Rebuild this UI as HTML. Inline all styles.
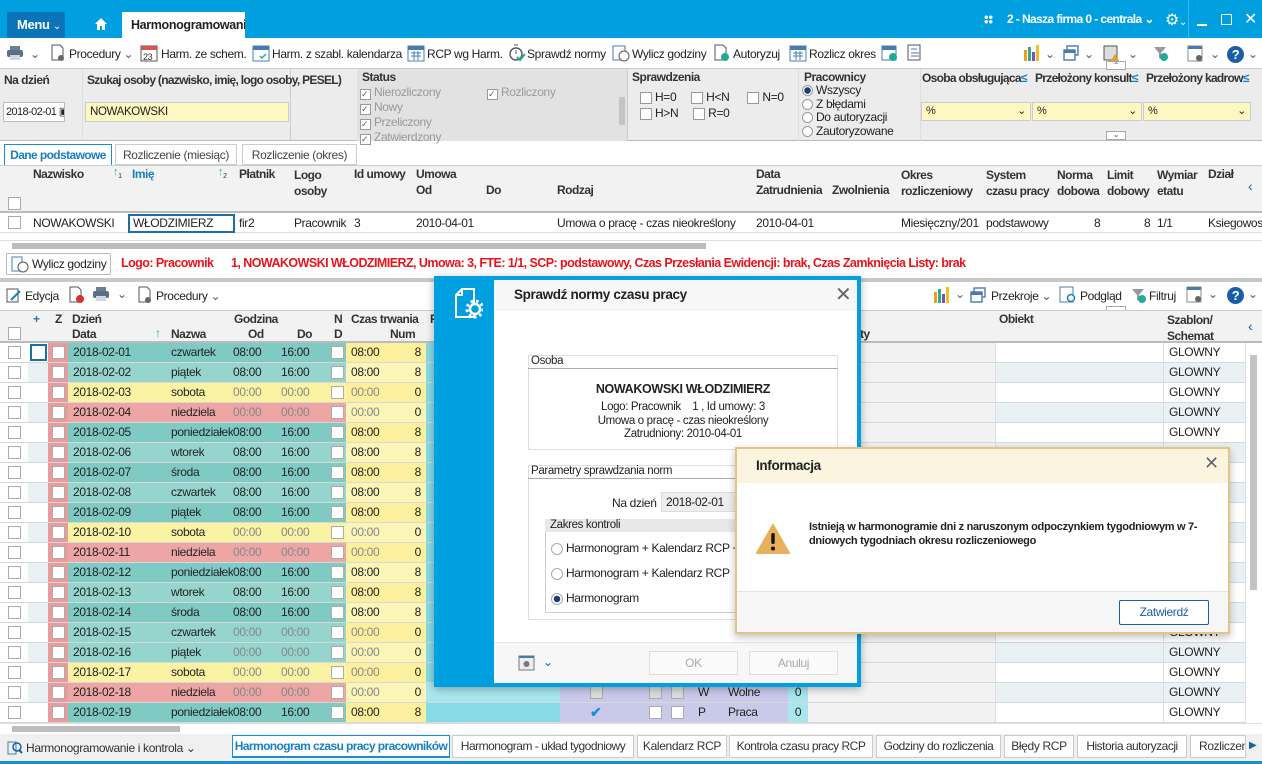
<!DOCTYPE html>
<html><head><meta charset="utf-8">
<style>
*{box-sizing:border-box;margin:0;padding:0}
body{width:1262px;height:764px;overflow:hidden;font-family:"Liberation Sans",sans-serif;font-size:12px;letter-spacing:-0.35px;color:#222;background:#fff;position:relative}
.a{position:absolute;white-space:nowrap}
.cb{position:absolute;width:13px;height:13px;border:1px solid #aaa;background:#fff}
.ti{display:inline-block;vertical-align:middle}
.tb span.it{position:absolute;top:47px;font-size:12px;color:#222;white-space:nowrap}
.hdr{position:absolute;font-weight:bold;font-size:12px;color:#333;white-space:nowrap;letter-spacing:-0.5px}
.r{position:absolute;left:0;width:1245px;height:20px;border-bottom:1px solid #d8d8d8}
.r div{position:absolute;top:0;height:19px;line-height:19px;white-space:nowrap;overflow:hidden}
.x0{left:0;width:28px;background:#fff}
.x1{left:28px;width:20px}
.xz{left:48px;width:20px;background:#ea9c9c}
.xd{left:68px;width:278px}
.xt{left:346px;width:80px;background:#fcf09e}
.xy{left:426px;width:134px;background:#86dbe6}
.xl{left:560px;width:228px;background:#c9c9e9}
.x0b{left:788px;width:20px;background:#a8e6ee;text-align:center}
.xg{left:808px;width:187px;background:#f2f2f2}
.xo{left:995px;width:168px;background:#fff;border-left:1px solid #ddd}
.xs{left:1163px;width:82px;background:#fff;padding-left:5px;border-left:1px solid #ddd}
.alt .x1,.alt .xo,.alt .xs{background:#eaf1f5}
.w .xd{background:#7fcbc4}.w2 .xd{background:#95d5ce}
.s .xd{background:#fbf3a4}.n .xd{background:#eda5a5}
.alt .xt{background:#fbf5b8}
.g .tm{color:#888}
.sb{position:absolute;width:13px;height:13px;border:1px solid #aaa;background:#fff;top:3px}
.btab{position:absolute;top:735px;height:23px;border:1px solid #ccc;background:#fff;line-height:21px;font-size:12px;color:#333;text-align:center;white-space:nowrap;overflow:hidden}
</style></head><body>

<!-- title bar -->
<div class="a" style="left:0;top:0;width:1262px;height:38px;background:#00a0e0"></div>
<div class="a" style="left:7px;top:12px;width:58px;height:26px;background:#0b73b8;color:#fff;font-weight:bold;font-size:13px;line-height:26px;padding-left:10px">Menu <span style="font-size:10px;font-weight:normal">&#8964;</span></div>
<svg class="a" style="left:94px;top:17px" width="14" height="14" viewBox="0 0 14 14"><path d="M7 1L1 7h2v6h3V9h2v4h3V7h2z" fill="#fff"/></svg>
<div class="a" style="left:122px;top:12px;width:123px;height:26px;background:#fff;font-weight:bold;font-size:12.5px;line-height:26px;padding-left:9px;overflow:hidden">Harmonogramowanie i Kontr</div>
<div class="a" style="left:984px;top:15px;width:9px;height:9px;background:radial-gradient(circle,#fff 1.5px,transparent 2px) 0 0/4.5px 4.5px"></div>
<div class="a" style="left:1007px;top:12px;color:#fff;font-weight:bold;font-size:12px;letter-spacing:-0.6px">2 - Nasza firma 0 - centrala &#8964;</div>
<div class="a" style="left:1165px;top:10px;color:#fff;font-size:16px">&#9881;<span style="font-size:10px">&#8964;</span></div>
<div class="a" style="left:1188px;top:0;width:1px;height:38px;background:#3cb6e8"></div>
<div class="a" style="left:1197px;top:24px;width:10px;height:2px;background:#fff"></div>
<div class="a" style="left:1221px;top:14px;width:11px;height:11px;border:1.5px solid #fff"></div>
<div class="a" style="left:1244px;top:9px;color:#fff;font-size:16px">&#10005;</div>

<!-- toolbar -->
<div class="a" style="left:0;top:38px;width:1262px;height:31px;background:#fff;border-bottom:1px solid #ccc"></div>
<div class="tb">
<svg class="a" style="left:6px;top:45px" width="18" height="16"><rect x="4" y="1" width="10" height="4" fill="#6b7f93"/><rect x="1" y="5" width="16" height="7" rx="2" fill="#5b7086"/><rect x="4" y="10" width="10" height="5" fill="#cfd8e0"/></svg>
<span class="it" style="left:30px;color:#557">&#8964;</span>
<svg class="a" style="left:50px;top:44px" width="16" height="18"><path d="M2 1h8l3 3v12H2z" fill="none" stroke="#555"/><circle cx="11" cy="14" r="3" fill="#666"/></svg>
<span class="it" style="left:69px">Procedury <span style="color:#557">&#8964;</span></span>
<svg class="a" style="left:140px;top:44px" width="18" height="18"><rect x="1" y="2" width="16" height="15" fill="#fff" stroke="#555"/><rect x="1" y="2" width="16" height="4" fill="#d9534f"/><text x="3" y="16" font-size="9" font-family="Liberation Sans" fill="#333">23</text></svg>
<span class="it" style="left:161px">Harm. ze schem.</span>
<svg class="a" style="left:252px;top:44px" width="18" height="18"><rect x="1" y="2" width="16" height="15" fill="#fff" stroke="#4a7bb0"/><rect x="1" y="2" width="16" height="4" fill="#4a7bb0"/><path d="M8 12l2 2 4-4" stroke="#2a9" fill="none" stroke-width="1.5"/></svg>
<span class="it" style="left:272px">Harm. z szabl. kalendarza</span>
<svg class="a" style="left:407px;top:44px" width="18" height="18"><rect x="1" y="2" width="16" height="15" fill="#fff" stroke="#4a7bb0"/><rect x="1" y="2" width="16" height="4" fill="#4a7bb0"/><path d="M4 9h10M4 12h10M7 7v9M11 7v9" stroke="#4a7bb0"/></svg>
<span class="it" style="left:427px">RCP wg Harm.</span>
<svg class="a" style="left:508px;top:44px" width="18" height="18"><circle cx="8" cy="10" r="6" fill="none" stroke="#555" stroke-width="1.4"/><path d="M6 1h4M8 10V6" stroke="#555"/><path d="M9 13l3 3 5-6" stroke="#2a9" stroke-width="2" fill="none"/></svg>
<span class="it" style="left:527px">Sprawdź normy</span>
<svg class="a" style="left:612px;top:44px" width="18" height="18"><rect x="1" y="2" width="12" height="14" fill="#fff" stroke="#4a7bb0"/><circle cx="12" cy="12" r="5" fill="#fff" stroke="#555"/></svg>
<span class="it" style="left:632px">Wylicz godziny</span>
<svg class="a" style="left:713px;top:44px" width="18" height="18"><path d="M2 1h8l3 3v12H2z" fill="none" stroke="#555"/><circle cx="12" cy="13" r="4" fill="#2a9"/></svg>
<span class="it" style="left:733px">Autoryzuj</span>
<svg class="a" style="left:789px;top:44px" width="18" height="18"><rect x="1" y="2" width="16" height="15" fill="#fff" stroke="#4a7bb0"/><rect x="1" y="2" width="16" height="4" fill="#4a7bb0"/><path d="M4 9h10M4 12h10M7 7v9M11 7v9" stroke="#4a7bb0"/></svg>
<span class="it" style="left:809px">Rozlicz okres</span>
<svg class="a" style="left:881px;top:44px" width="18" height="18"><rect x="1" y="2" width="14" height="14" fill="#fff" stroke="#4a7bb0"/><rect x="1" y="2" width="14" height="4" fill="#4a7bb0"/><circle cx="12" cy="13" r="4" fill="#2a9"/></svg>
<svg class="a" style="left:906px;top:44px" width="18" height="18"><rect x="2" y="1" width="12" height="15" fill="#fff" stroke="#555"/><path d="M5 5h6M5 9h8M5 12h8" stroke="#4a7bb0"/></svg>
<svg class="a" style="left:1022px;top:44px" width="18" height="18"><rect x="2" y="6" width="3" height="11" fill="#e8a020"/><rect x="6" y="3" width="3" height="14" fill="#3a8"/><rect x="10" y="8" width="3" height="9" fill="#7a4fc0"/><rect x="14" y="1" width="3" height="16" fill="#f0c020"/></svg>
<span class="it" style="left:1045px;color:#557">&#8964;</span>
<svg class="a" style="left:1063px;top:45px" width="16" height="16"><rect x="4" y="1" width="11" height="9" fill="none" stroke="#4a7bb0" stroke-width="1.4"/><rect x="1" y="5" width="11" height="10" fill="#fff" stroke="#4a7bb0" stroke-width="1.4"/><rect x="1" y="5" width="11" height="3" fill="#4a7bb0"/></svg>
<span class="it" style="left:1084px;color:#557">&#8964;</span>
<svg class="a" style="left:1103px;top:45px" width="18" height="18"><rect x="1" y="1" width="13" height="14" fill="#ddd" stroke="#555"/><path d="M12 9l5 8h-10z" fill="#e8a020"/></svg>
<span class="it" style="left:1128px;color:#557">&#8964;</span>
<svg class="a" style="left:1153px;top:45px" width="16" height="16"><path d="M1 2h12l-5 6v6l-2-1V8z" fill="#999"/><circle cx="11" cy="12" r="4" fill="#2a9"/></svg>
<svg class="a" style="left:1187px;top:45px" width="18" height="18"><rect x="1" y="1" width="14" height="15" fill="#fff" stroke="#888"/><rect x="1" y="1" width="14" height="3" fill="#4a7bb0"/><circle cx="12" cy="13" r="3" fill="#666"/></svg>
<span class="it" style="left:1210px;color:#557">&#8964;</span>
<div class="a" style="left:1227px;top:46px;width:17px;height:17px;border-radius:50%;background:#1a5ea8;color:#fff;font-weight:bold;text-align:center;line-height:17px;font-size:13px">?</div>
<span class="it" style="left:1248px;color:#557">&#8964;</span>
</div>

<!-- filter panel -->
<div class="a" style="left:0;top:69px;width:1262px;height:72px;background:#ececec;border-bottom:1px solid #bbb"></div>
<div class="a" style="left:82px;top:69px;width:1px;height:72px;background:#ddd"></div>
<div class="a" style="left:290px;top:69px;width:1px;height:72px;background:#ccc"></div>
<div class="a" style="left:357px;top:69px;width:270px;height:72px;background:#e2e2e2"></div>
<div class="a" style="left:627px;top:69px;width:1px;height:72px;background:#ccc"></div>
<div class="a" style="left:798px;top:69px;width:1px;height:72px;background:#ddd"></div>
<div class="a" style="left:920px;top:69px;width:1px;height:72px;background:#ddd"></div>
<div class="hdr" style="left:4px;top:73px">Na dzień</div>
<div class="hdr" style="left:87px;top:73px;letter-spacing:-0.7px">Szukaj osoby (nazwisko, imię, logo osoby, PESEL)</div>
<div class="a" style="left:3px;top:102px;width:62px;height:20px;border:1px solid #bbb;background:#fff;line-height:18px;padding-left:2px;font-size:11px;letter-spacing:-0.6px;overflow:hidden">2018-02-01 &#9635;</div>
<div class="a" style="left:85px;top:102px;width:204px;height:20px;border:1px solid #ccc;background:#fdf8c2;line-height:18px;padding-left:4px;font-size:11.5px">NOWAKOWSKI</div>
<div class="hdr" style="left:362px;top:70px">Status</div>
<div class="a" style="left:360px;top:85px;color:#999;font-size:12px;line-height:14px">
<div><span style="display:inline-block;width:11px;height:11px;border:1px solid #999;background:#fff;color:#468;font-size:9px;line-height:9px;vertical-align:-1px">&#10003;</span> Nierozliczony</div>
<div><span style="display:inline-block;width:11px;height:11px;border:1px solid #999;background:#fff;color:#468;font-size:9px;line-height:9px;vertical-align:-1px">&#10003;</span> Nowy</div>
<div><span style="display:inline-block;width:11px;height:11px;border:1px solid #999;background:#fff;color:#468;font-size:9px;line-height:9px;vertical-align:-1px">&#10003;</span> Przeliczony</div>
<div><span style="display:inline-block;width:11px;height:11px;border:1px solid #999;background:#fff;color:#468;font-size:9px;line-height:9px;vertical-align:-1px">&#10003;</span> Zatwierdzony</div>
</div>
<div class="a" style="left:487px;top:85px;color:#999;font-size:12px"><span style="display:inline-block;width:11px;height:11px;border:1px solid #999;background:#fff;color:#468;font-size:9px;line-height:9px;vertical-align:-1px">&#10003;</span> Rozliczony</div>
<div class="a" style="left:619px;top:97px;width:6px;height:28px;background:#c4c4c4"></div>
<div class="hdr" style="left:632px;top:70px">Sprawdzenia</div>
<div class="a" style="left:640px;top:89px;font-size:12px;line-height:16px">
<span class="ti" style="width:12px;height:12px;border:1px solid #999;background:#fff"></span> H=0 &nbsp;&nbsp;&nbsp;&nbsp;<span class="ti" style="width:12px;height:12px;border:1px solid #999;background:#fff"></span> H&lt;N &nbsp;&nbsp;&nbsp;&nbsp;&nbsp;<span class="ti" style="width:12px;height:12px;border:1px solid #999;background:#fff"></span> N=0<br>
<span class="ti" style="width:12px;height:12px;border:1px solid #999;background:#fff"></span> H&gt;N &nbsp;&nbsp;&nbsp;&nbsp;<span class="ti" style="width:12px;height:12px;border:1px solid #999;background:#fff"></span> R=0</div>
<div class="hdr" style="left:804px;top:70px">Pracownicy</div>
<div class="a" style="left:802px;top:84px;font-size:12px;line-height:13.5px">
<div><span class="ti" style="width:11px;height:11px;border-radius:50%;border:1px solid #999;background:radial-gradient(circle,#1a3f7a 3px,#fff 3.5px)"></span> Wszyscy</div>
<div><span class="ti" style="width:11px;height:11px;border-radius:50%;border:1px solid #999;background:#fff"></span> Z błędami</div>
<div><span class="ti" style="width:11px;height:11px;border-radius:50%;border:1px solid #999;background:#fff"></span> Do autoryzacji</div>
<div><span class="ti" style="width:11px;height:11px;border-radius:50%;border:1px solid #999;background:#fff"></span> Zautoryzowane</div>
</div>
<div class="hdr" style="left:922px;top:71px;width:110px;overflow:hidden;letter-spacing:-0.7px">Osoba obsługująca<span style="color:#1a7fc0">&#8804;</span></div>
<div class="hdr" style="left:1035px;top:71px;width:108px;overflow:hidden;letter-spacing:-0.7px">Przełożony konsult<span style="color:#1a7fc0">&#8804;</span></div>
<div class="hdr" style="left:1146px;top:71px;width:104px;overflow:hidden;letter-spacing:-0.7px">Przełożony kadrow<span style="color:#1a7fc0">&#8804;</span></div>
<div class="a" style="left:921px;top:102px;width:110px;height:19px;border:1px solid #ccc;background:#fdf8c2;line-height:17px;padding-left:4px;font-size:11px">%<span style="position:absolute;right:4px">&#8964;</span></div>
<div class="a" style="left:1032px;top:102px;width:110px;height:19px;border:1px solid #ccc;background:#fdf8c2;line-height:17px;padding-left:4px;font-size:11px">%<span style="position:absolute;right:4px">&#8964;</span></div>
<div class="a" style="left:1143px;top:102px;width:108px;height:19px;border:1px solid #ccc;background:#fdf8c2;line-height:17px;padding-left:4px;font-size:11px">%<span style="position:absolute;right:4px">&#8964;</span></div>
<div class="a" style="left:1106px;top:61px;width:20px;height:9px;border:1px solid #aaa;background:#fff;font-size:8px;text-align:center;line-height:8px;color:#1a5ea8">&#8963;</div>
<div class="a" style="left:1106px;top:131px;width:20px;height:9px;border:1px solid #aaa;background:#fff;font-size:8px;text-align:center;line-height:6px;color:#1a5ea8">&#8964;</div>

<!-- tabs -->
<div class="a" style="left:4px;top:144px;width:108px;height:22px;border:1px solid #1a8fd0;border-bottom:none;background:#fff;color:#1a7fc0;font-weight:bold;line-height:20px;text-align:center;letter-spacing:-0.6px">Dane podstawowe</div>
<div class="a" style="left:115px;top:144px;width:122px;height:21px;border:1px solid #ccc;background:#fff;color:#444;line-height:20px;text-align:center">Rozliczenie (miesiąc)</div>
<div class="a" style="left:242px;top:144px;width:115px;height:21px;border:1px solid #ccc;background:#fff;color:#444;line-height:20px;text-align:center">Rozliczenie (okres)</div>

<!-- upper grid -->
<div class="a" style="left:0;top:165px;width:1262px;height:48px;background:#f2f2f2;border-top:1px solid #ccc;border-bottom:2px solid #bbb"></div>
<div class="cb" style="left:8px;top:197px"></div>
<div class="hdr" style="left:33px;top:167px">Nazwisko</div><div class="a" style="left:113px;top:166px;color:#3a8;font-size:11px">&#8593;<sub style="color:#333;font-size:7px">1</sub></div>
<div class="hdr" style="left:132px;top:167px;color:#1a7fc0">Imię</div><div class="a" style="left:218px;top:166px;color:#3a8;font-size:11px">&#8593;<sub style="color:#333;font-size:7px">2</sub></div>
<div class="hdr" style="left:239px;top:167px">Płatnik</div>
<div class="hdr" style="left:294px;top:167px;line-height:16px">Logo<br>osoby</div>
<div class="hdr" style="left:354px;top:167px">Id umowy</div>
<div class="hdr" style="left:416px;top:167px">Umowa</div>
<div class="hdr" style="left:416px;top:183px">Od</div><div class="hdr" style="left:486px;top:183px">Do</div><div class="hdr" style="left:557px;top:183px">Rodzaj</div>
<div class="hdr" style="left:756px;top:167px">Data</div>
<div class="hdr" style="left:756px;top:183px">Zatrudnienia</div><div class="hdr" style="left:832px;top:183px">Zwolnienia</div>
<div class="hdr" style="left:901px;top:167px;line-height:16px">Okres<br>rozliczeniowy</div>
<div class="hdr" style="left:986px;top:167px;line-height:16px">System<br>czasu pracy</div>
<div class="hdr" style="left:1057px;top:167px;line-height:16px">Norma<br>dobowa</div>
<div class="hdr" style="left:1107px;top:167px;line-height:16px">Limit<br>dobowy</div>
<div class="hdr" style="left:1157px;top:167px;line-height:16px">Wymiar<br>etatu</div>
<div class="hdr" style="left:1208px;top:167px">Dział</div>
<div class="a" style="left:1248px;top:178px;color:#1a5ea8;font-size:14px">&#8249;</div>
<div class="a" style="left:0;top:213px;width:1262px;height:20px;border-bottom:1px solid #ddd;line-height:20px">
<div class="cb" style="left:8px;top:3px"></div>
<span class="a" style="left:33px">NOWAKOWSKI</span>
<span class="a" style="left:128px;top:1px;width:107px;height:19px;border:2px solid #1a6fa8;line-height:15px;padding-left:3px">WŁODZIMIERZ</span>
<span class="a" style="left:239px">fir2</span><span class="a" style="left:294px">Pracownik</span><span class="a" style="left:354px">3</span>
<span class="a" style="left:416px">2010-04-01</span><span class="a" style="left:557px">Umowa o pracę - czas nieokreślony</span>
<span class="a" style="left:756px">2010-04-01</span><span class="a" style="left:901px;width:82px;overflow:hidden">Miesięczny/201</span><span class="a" style="left:986px">podstawowy</span>
<span class="a" style="left:1094px">8</span><span class="a" style="left:1144px">8</span><span class="a" style="left:1157px">1/1</span><span class="a" style="left:1208px">Ksiegowos</span>
</div>
<div class="a" style="left:0;top:240px;width:1262px;height:10px;border-top:1px solid #ddd"></div>
<div class="a" style="left:12px;top:243px;width:694px;height:6px;background:#bdbdbd"></div>
<div class="a" style="left:6px;top:253px;width:105px;height:22px;border:1px solid #bbb;border-radius:2px;background:#fff;line-height:20px;padding-left:25px">Wylicz godziny</div>
<svg class="a" style="left:11px;top:256px" width="18" height="17"><rect x="1" y="1" width="10" height="14" fill="#fff" stroke="#4a7bb0"/><circle cx="12" cy="11" r="5" fill="#fff" stroke="#555"/></svg>
<div class="a" style="left:121px;top:256px;color:#e8131b;font-weight:bold;font-size:12.5px;letter-spacing:-0.55px">Logo: Pracownik &nbsp;&nbsp;&nbsp;&nbsp;&nbsp;1, NOWAKOWSKI WŁODZIMIERZ, Umowa: 3, FTE: 1/1, SCP: podstawowy, Czas Przesłania Ewidencji: brak, Czas Zamknięcia Listy: brak</div>
<div class="a" style="left:0;top:278px;width:1262px;height:4px;background:#c8c8c8"></div>

<!-- lower toolbar -->
<svg class="a" style="left:6px;top:287px" width="16" height="16"><rect x="1" y="2" width="11" height="13" fill="none" stroke="#555"/><path d="M5 13l9-9" stroke="#1a7fc0" stroke-width="2"/></svg>
<span class="a" style="left:25px;top:289px">Edycja</span>
<svg class="a" style="left:68px;top:286px" width="18" height="18"><path d="M2 1h8l3 3v12H2z" fill="none" stroke="#555"/><circle cx="12" cy="13" r="4" fill="#d9342b"/></svg>
<svg class="a" style="left:92px;top:286px" width="18" height="16"><rect x="4" y="1" width="10" height="4" fill="#6b7f93"/><rect x="1" y="5" width="16" height="7" rx="2" fill="#5b7086"/><rect x="4" y="10" width="10" height="5" fill="#cfd8e0"/></svg>
<span class="a" style="left:117px;top:287px;color:#557">&#8964;</span>
<svg class="a" style="left:137px;top:286px" width="16" height="18"><path d="M2 1h8l3 3v12H2z" fill="none" stroke="#555"/><circle cx="11" cy="14" r="3" fill="#666"/></svg>
<span class="a" style="left:156px;top:289px">Procedury <span style="color:#557">&#8964;</span></span>
<svg class="a" style="left:932px;top:286px" width="18" height="18"><rect x="2" y="6" width="3" height="11" fill="#e8a020"/><rect x="6" y="3" width="3" height="14" fill="#3a8"/><rect x="10" y="8" width="3" height="9" fill="#7a4fc0"/><rect x="14" y="1" width="3" height="16" fill="#f0c020"/></svg>
<span class="a" style="left:955px;top:287px;color:#557">&#8964;</span>
<svg class="a" style="left:970px;top:287px" width="16" height="16"><rect x="4" y="1" width="11" height="9" fill="none" stroke="#4a7bb0" stroke-width="1.4"/><rect x="1" y="5" width="11" height="10" fill="#fff" stroke="#4a7bb0" stroke-width="1.4"/><rect x="1" y="5" width="11" height="3" fill="#4a7bb0"/></svg>
<span class="a" style="left:991px;top:289px">Przekroje <span style="color:#557">&#8964;</span></span>
<svg class="a" style="left:1059px;top:286px" width="18" height="18"><rect x="1" y="1" width="13" height="15" fill="#fff" stroke="#4a7bb0"/><circle cx="12" cy="12" r="3.5" fill="#fff" stroke="#1a7fc0" stroke-width="1.5"/></svg>
<span class="a" style="left:1080px;top:289px">Podgląd</span>
<svg class="a" style="left:1131px;top:287px" width="16" height="16"><path d="M1 2h12l-5 6v6l-2-1V8z" fill="#999"/><circle cx="11" cy="12" r="4" fill="#2a9"/></svg>
<span class="a" style="left:1149px;top:289px">Filtruj</span>
<svg class="a" style="left:1186px;top:286px" width="18" height="18"><rect x="1" y="1" width="14" height="15" fill="#fff" stroke="#888"/><rect x="1" y="1" width="14" height="3" fill="#4a7bb0"/><circle cx="12" cy="13" r="3" fill="#666"/></svg>
<span class="a" style="left:1208px;top:287px;color:#557">&#8964;</span>
<div class="a" style="left:1227px;top:287px;width:17px;height:17px;border-radius:50%;background:#1a5ea8;color:#fff;font-weight:bold;text-align:center;line-height:17px;font-size:13px">?</div>
<span class="a" style="left:1248px;top:287px;color:#557">&#8964;</span>
<div class="a" style="left:1106px;top:306px;width:20px;height:9px;border:1px solid #aaa;background:#fff;font-size:8px;text-align:center;line-height:6px;color:#1a5ea8">&#8964;</div>

<!-- lower header -->
<div class="a" style="left:0;top:310px;width:1262px;height:33px;background:#f2f2f2;border-top:1px solid #ccc;border-bottom:2px solid #bbb"></div>
<div class="cb" style="left:8px;top:327px"></div>
<div class="hdr" style="left:33px;top:312px;color:#1a7fc0">+</div>
<div class="hdr" style="left:55px;top:312px">Z</div>
<div class="hdr" style="left:72px;top:312px">Dzień</div>
<div class="hdr" style="left:72px;top:327px">Data</div><div class="a" style="left:155px;top:326px;color:#3a8">&#8593;</div>
<div class="hdr" style="left:171px;top:327px">Nazwa</div>
<div class="hdr" style="left:234px;top:312px">Godzina</div>
<div class="hdr" style="left:248px;top:327px">Od</div><div class="hdr" style="left:297px;top:327px">Do</div>
<div class="hdr" style="left:334px;top:312px">N</div><div class="hdr" style="left:334px;top:327px">D</div>
<div class="hdr" style="left:351px;top:312px">Czas trwania</div><div class="hdr" style="left:390px;top:327px">Num</div>
<div class="hdr" style="left:430px;top:312px">P</div>
<div class="hdr" style="left:860px;top:327px">ty</div>
<div class="hdr" style="left:999px;top:312px">Obiekt</div>
<div class="hdr" style="left:1167px;top:312px;line-height:16px">Szablon/<br>Schemat</div>
<div class="a" style="left:1248px;top:318px;color:#1a5ea8;font-size:14px">&#8249;</div>

<!-- lower rows -->
<div id="rows">
<div class="r w" style="top:343px"><div class="x0"><span class="sb" style="left:8px"></span></div><div class="x1"><span class="a" style="left:2px;top:1px;width:17px;height:17px;border:2px solid #1a6fa8;background:#fff"></span></div><div class="xz"><span class="sb" style="left:4px"></span></div><div class="xd"><span class="a" style="left:5px">2018-02-01</span><span class="a" style="left:103px">czwartek</span><span class="a tm" style="left:165px">08:00</span><span class="a tm" style="left:213px">16:00</span><span class="sb" style="left:263px"></span></div><div class="xt"><span class="a tm" style="left:5px">08:00</span><span class="a" style="right:5px">8</span></div><div class="xy"></div><div class="xl"></div><div class="x0b">0</div><div class="xg"></div><div class="xo"></div><div class="xs">GLOWNY</div></div>
<div class="r w2 alt" style="top:363px"><div class="x0"><span class="sb" style="left:8px"></span></div><div class="x1"></div><div class="xz"><span class="sb" style="left:4px"></span></div><div class="xd"><span class="a" style="left:5px">2018-02-02</span><span class="a" style="left:103px">piątek</span><span class="a tm" style="left:165px">08:00</span><span class="a tm" style="left:213px">16:00</span><span class="sb" style="left:263px"></span></div><div class="xt"><span class="a tm" style="left:5px">08:00</span><span class="a" style="right:5px">8</span></div><div class="xy"></div><div class="xl"></div><div class="x0b">0</div><div class="xg"></div><div class="xo"></div><div class="xs">GLOWNY</div></div>
<div class="r s g" style="top:383px"><div class="x0"><span class="sb" style="left:8px"></span></div><div class="x1"></div><div class="xz"><span class="sb" style="left:4px"></span></div><div class="xd"><span class="a" style="left:5px">2018-02-03</span><span class="a" style="left:103px">sobota</span><span class="a tm" style="left:165px">00:00</span><span class="a tm" style="left:213px">00:00</span><span class="sb" style="left:263px"></span></div><div class="xt"><span class="a tm" style="left:5px">00:00</span><span class="a" style="right:5px">0</span></div><div class="xy"></div><div class="xl"></div><div class="x0b">0</div><div class="xg"></div><div class="xo"></div><div class="xs">GLOWNY</div></div>
<div class="r n g alt" style="top:403px"><div class="x0"><span class="sb" style="left:8px"></span></div><div class="x1"></div><div class="xz"><span class="sb" style="left:4px"></span></div><div class="xd"><span class="a" style="left:5px">2018-02-04</span><span class="a" style="left:103px">niedziela</span><span class="a tm" style="left:165px">00:00</span><span class="a tm" style="left:213px">00:00</span><span class="sb" style="left:263px"></span></div><div class="xt"><span class="a tm" style="left:5px">00:00</span><span class="a" style="right:5px">0</span></div><div class="xy"></div><div class="xl"></div><div class="x0b">0</div><div class="xg"></div><div class="xo"></div><div class="xs">GLOWNY</div></div>
<div class="r w" style="top:423px"><div class="x0"><span class="sb" style="left:8px"></span></div><div class="x1"></div><div class="xz"><span class="sb" style="left:4px"></span></div><div class="xd"><span class="a" style="left:5px">2018-02-05</span><span class="a" style="left:103px;width:62px;overflow:hidden">poniedziałek</span><span class="a tm" style="left:165px">08:00</span><span class="a tm" style="left:213px">16:00</span><span class="sb" style="left:263px"></span></div><div class="xt"><span class="a tm" style="left:5px">08:00</span><span class="a" style="right:5px">8</span></div><div class="xy"></div><div class="xl"></div><div class="x0b">0</div><div class="xg"></div><div class="xo"></div><div class="xs">GLOWNY</div></div>
<div class="r w2 alt" style="top:443px"><div class="x0"><span class="sb" style="left:8px"></span></div><div class="x1"></div><div class="xz"><span class="sb" style="left:4px"></span></div><div class="xd"><span class="a" style="left:5px">2018-02-06</span><span class="a" style="left:103px">wtorek</span><span class="a tm" style="left:165px">08:00</span><span class="a tm" style="left:213px">16:00</span><span class="sb" style="left:263px"></span></div><div class="xt"><span class="a tm" style="left:5px">08:00</span><span class="a" style="right:5px">8</span></div><div class="xy"></div><div class="xl"></div><div class="x0b">0</div><div class="xg"></div><div class="xo"></div><div class="xs">GLOWNY</div></div>
<div class="r w" style="top:463px"><div class="x0"><span class="sb" style="left:8px"></span></div><div class="x1"></div><div class="xz"><span class="sb" style="left:4px"></span></div><div class="xd"><span class="a" style="left:5px">2018-02-07</span><span class="a" style="left:103px">środa</span><span class="a tm" style="left:165px">08:00</span><span class="a tm" style="left:213px">16:00</span><span class="sb" style="left:263px"></span></div><div class="xt"><span class="a tm" style="left:5px">08:00</span><span class="a" style="right:5px">8</span></div><div class="xy"></div><div class="xl"></div><div class="x0b">0</div><div class="xg"></div><div class="xo"></div><div class="xs">GLOWNY</div></div>
<div class="r w2 alt" style="top:483px"><div class="x0"><span class="sb" style="left:8px"></span></div><div class="x1"></div><div class="xz"><span class="sb" style="left:4px"></span></div><div class="xd"><span class="a" style="left:5px">2018-02-08</span><span class="a" style="left:103px">czwartek</span><span class="a tm" style="left:165px">08:00</span><span class="a tm" style="left:213px">16:00</span><span class="sb" style="left:263px"></span></div><div class="xt"><span class="a tm" style="left:5px">08:00</span><span class="a" style="right:5px">8</span></div><div class="xy"></div><div class="xl"></div><div class="x0b">0</div><div class="xg"></div><div class="xo"></div><div class="xs">GLOWNY</div></div>
<div class="r w" style="top:503px"><div class="x0"><span class="sb" style="left:8px"></span></div><div class="x1"></div><div class="xz"><span class="sb" style="left:4px"></span></div><div class="xd"><span class="a" style="left:5px">2018-02-09</span><span class="a" style="left:103px">piątek</span><span class="a tm" style="left:165px">08:00</span><span class="a tm" style="left:213px">16:00</span><span class="sb" style="left:263px"></span></div><div class="xt"><span class="a tm" style="left:5px">08:00</span><span class="a" style="right:5px">8</span></div><div class="xy"></div><div class="xl"></div><div class="x0b">0</div><div class="xg"></div><div class="xo"></div><div class="xs">GLOWNY</div></div>
<div class="r s g alt" style="top:523px"><div class="x0"><span class="sb" style="left:8px"></span></div><div class="x1"></div><div class="xz"><span class="sb" style="left:4px"></span></div><div class="xd"><span class="a" style="left:5px">2018-02-10</span><span class="a" style="left:103px">sobota</span><span class="a tm" style="left:165px">00:00</span><span class="a tm" style="left:213px">00:00</span><span class="sb" style="left:263px"></span></div><div class="xt"><span class="a tm" style="left:5px">00:00</span><span class="a" style="right:5px">0</span></div><div class="xy"></div><div class="xl"></div><div class="x0b">0</div><div class="xg"></div><div class="xo"></div><div class="xs">GLOWNY</div></div>
<div class="r n g" style="top:543px"><div class="x0"><span class="sb" style="left:8px"></span></div><div class="x1"></div><div class="xz"><span class="sb" style="left:4px"></span></div><div class="xd"><span class="a" style="left:5px">2018-02-11</span><span class="a" style="left:103px">niedziela</span><span class="a tm" style="left:165px">00:00</span><span class="a tm" style="left:213px">00:00</span><span class="sb" style="left:263px"></span></div><div class="xt"><span class="a tm" style="left:5px">00:00</span><span class="a" style="right:5px">0</span></div><div class="xy"></div><div class="xl"></div><div class="x0b">0</div><div class="xg"></div><div class="xo"></div><div class="xs">GLOWNY</div></div>
<div class="r w alt" style="top:563px"><div class="x0"><span class="sb" style="left:8px"></span></div><div class="x1"></div><div class="xz"><span class="sb" style="left:4px"></span></div><div class="xd"><span class="a" style="left:5px">2018-02-12</span><span class="a" style="left:103px;width:62px;overflow:hidden">poniedziałek</span><span class="a tm" style="left:165px">08:00</span><span class="a tm" style="left:213px">16:00</span><span class="sb" style="left:263px"></span></div><div class="xt"><span class="a tm" style="left:5px">08:00</span><span class="a" style="right:5px">8</span></div><div class="xy"></div><div class="xl"></div><div class="x0b">0</div><div class="xg"></div><div class="xo"></div><div class="xs">GLOWNY</div></div>
<div class="r w2" style="top:583px"><div class="x0"><span class="sb" style="left:8px"></span></div><div class="x1"></div><div class="xz"><span class="sb" style="left:4px"></span></div><div class="xd"><span class="a" style="left:5px">2018-02-13</span><span class="a" style="left:103px">wtorek</span><span class="a tm" style="left:165px">08:00</span><span class="a tm" style="left:213px">16:00</span><span class="sb" style="left:263px"></span></div><div class="xt"><span class="a tm" style="left:5px">08:00</span><span class="a" style="right:5px">8</span></div><div class="xy"></div><div class="xl"></div><div class="x0b">0</div><div class="xg"></div><div class="xo"></div><div class="xs">GLOWNY</div></div>
<div class="r w alt" style="top:603px"><div class="x0"><span class="sb" style="left:8px"></span></div><div class="x1"></div><div class="xz"><span class="sb" style="left:4px"></span></div><div class="xd"><span class="a" style="left:5px">2018-02-14</span><span class="a" style="left:103px">środa</span><span class="a tm" style="left:165px">08:00</span><span class="a tm" style="left:213px">16:00</span><span class="sb" style="left:263px"></span></div><div class="xt"><span class="a tm" style="left:5px">08:00</span><span class="a" style="right:5px">8</span></div><div class="xy"></div><div class="xl"></div><div class="x0b">0</div><div class="xg"></div><div class="xo"></div><div class="xs">GLOWNY</div></div>
<div class="r w2 g" style="top:623px"><div class="x0"><span class="sb" style="left:8px"></span></div><div class="x1"></div><div class="xz"><span class="sb" style="left:4px"></span></div><div class="xd"><span class="a" style="left:5px">2018-02-15</span><span class="a" style="left:103px">czwartek</span><span class="a tm" style="left:165px">00:00</span><span class="a tm" style="left:213px">00:00</span><span class="sb" style="left:263px"></span></div><div class="xt"><span class="a tm" style="left:5px">00:00</span><span class="a" style="right:5px">0</span></div><div class="xy"></div><div class="xl"></div><div class="x0b">0</div><div class="xg"></div><div class="xo"></div><div class="xs">GLOWNY</div></div>
<div class="r w g alt" style="top:643px"><div class="x0"><span class="sb" style="left:8px"></span></div><div class="x1"></div><div class="xz"><span class="sb" style="left:4px"></span></div><div class="xd" style="background:#95d5ce"><span class="a" style="left:5px">2018-02-16</span><span class="a" style="left:103px">piątek</span><span class="a tm" style="left:165px">00:00</span><span class="a tm" style="left:213px">00:00</span><span class="sb" style="left:263px"></span></div><div class="xt"><span class="a tm" style="left:5px">00:00</span><span class="a" style="right:5px">0</span></div><div class="xy"></div><div class="xl"></div><div class="x0b">0</div><div class="xg"></div><div class="xo"></div><div class="xs">GLOWNY</div></div>
<div class="r s g" style="top:663px"><div class="x0"><span class="sb" style="left:8px"></span></div><div class="x1"></div><div class="xz"><span class="sb" style="left:4px"></span></div><div class="xd"><span class="a" style="left:5px">2018-02-17</span><span class="a" style="left:103px">sobota</span><span class="a tm" style="left:165px">00:00</span><span class="a tm" style="left:213px">00:00</span><span class="sb" style="left:263px"></span></div><div class="xt"><span class="a tm" style="left:5px">00:00</span><span class="a" style="right:5px">0</span></div><div class="xy"></div><div class="xl"></div><div class="x0b">0</div><div class="xg"></div><div class="xo"></div><div class="xs">GLOWNY</div></div>
<div class="r n g alt" style="top:683px"><div class="x0"><span class="sb" style="left:8px"></span></div><div class="x1"></div><div class="xz"><span class="sb" style="left:4px"></span></div><div class="xd"><span class="a" style="left:5px">2018-02-18</span><span class="a" style="left:103px">niedziela</span><span class="a tm" style="left:165px">00:00</span><span class="a tm" style="left:213px">00:00</span><span class="sb" style="left:263px"></span></div><div class="xt"><span class="a tm" style="left:5px">00:00</span><span class="a" style="right:5px">0</span></div><div class="xy" style="background:#a8e6ee"></div><div class="xl"><span class="sb" style="left:30px;background:#ddd"></span><span class="sb" style="left:89px;background:#ddd"></span><span class="sb" style="left:111px;background:#ddd"></span><span class="a" style="left:138px">W</span><span class="a" style="left:168px">Wolne</span></div><div class="x0b">0</div><div class="xg"></div><div class="xo"></div><div class="xs">GLOWNY</div></div>
<div class="r w" style="top:703px"><div class="x0"><span class="sb" style="left:8px"></span></div><div class="x1"></div><div class="xz"><span class="sb" style="left:4px"></span></div><div class="xd"><span class="a" style="left:5px">2018-02-19</span><span class="a" style="left:103px;width:62px;overflow:hidden">poniedziałek</span><span class="a tm" style="left:165px">08:00</span><span class="a tm" style="left:213px">16:00</span><span class="sb" style="left:263px"></span></div><div class="xt"><span class="a tm" style="left:5px">08:00</span><span class="a" style="right:5px">8</span></div><div class="xy"></div><div class="xl"><span class="a" style="left:30px;color:#1a8fe0;font-weight:bold;font-size:14px">&#10004;</span><span class="sb" style="left:89px"></span><span class="sb" style="left:111px"></span><span class="a" style="left:138px">P</span><span class="a" style="left:168px">Praca</span></div><div class="x0b">0</div><div class="xg"></div><div class="xo"></div><div class="xs">GLOWNY</div></div>
</div>
<div class="a" style="left:1245px;top:343px;width:17px;height:380px;background:#fff;border-left:1px solid #ddd"></div>
<div class="a" style="left:1250px;top:355px;width:7px;height:235px;background:#c4c4c4"></div>
<div class="a" style="left:0;top:723px;width:1262px;height:11px;background:#fff;border-top:1px solid #ddd"></div>
<div class="a" style="left:12px;top:726px;width:168px;height:6px;background:#bdbdbd"></div>

<!-- bottom tabs -->
<div class="a" style="left:0;top:734px;width:1262px;height:30px;background:#f0f0f0;border-bottom:3px solid #1a8fd0"></div>
<svg class="a" style="left:7px;top:740px" width="16" height="16"><rect x="1" y="2" width="8" height="12" fill="none" stroke="#4a7bb0"/><circle cx="10" cy="7" r="4" fill="none" stroke="#1a5ea8" stroke-width="1.5"/><path d="M12 10l3 3" stroke="#1a5ea8" stroke-width="2"/></svg>
<div class="a" style="left:26px;top:741px;color:#333">Harmonogramowanie i kontrola &#8964;</div>
<div class="btab" style="left:232px;width:218px;border-color:#1a8fd0;border-bottom:2px solid #1a8fd0;color:#1a7fc0;font-weight:bold;letter-spacing:-0.6px">Harmonogram czasu pracy pracowników</div>
<div class="btab" style="left:452px;width:182px;letter-spacing:-0.5px">Harmonogram - układ tygodniowy</div>
<div class="btab" style="left:637px;width:90px">Kalendarz RCP</div>
<div class="btab" style="left:729px;width:144px;letter-spacing:-0.5px">Kontrola czasu pracy RCP</div>
<div class="btab" style="left:876px;width:125px;letter-spacing:-0.5px">Godziny do rozliczenia</div>
<div class="btab" style="left:1004px;width:70px">Błędy RCP</div>
<div class="btab" style="left:1077px;width:110px;letter-spacing:-0.5px">Historia autoryzacji</div>
<div class="btab" style="left:1190px;width:56px;text-align:left;padding-left:8px">Rozliczenie</div>
<div class="a" style="left:1249px;top:740px;color:#1a5ea8;font-size:10px">&#9654;</div>

<!-- dialog 1 -->
<div class="a" style="left:434px;top:276px;width:427px;height:411px;background:#00a0e0;box-shadow:0 2px 8px rgba(0,0,0,.3)"></div>
<svg class="a" style="left:453px;top:287px" width="30" height="32"><path d="M3 8l6-6h12v28H3z" fill="none" stroke="#fff" stroke-width="2"/><path d="M3 8h6V2" fill="none" stroke="#fff" stroke-width="2"/><circle cx="22" cy="22" r="5" fill="#00a0e0" stroke="#fff" stroke-width="2.5"/><circle cx="22" cy="22" r="8" fill="none" stroke="#fff" stroke-width="3" stroke-dasharray="2.5 3"/></svg>
<div class="a" style="left:494px;top:280px;width:363px;height:403px;background:#fff"></div>
<div class="a" style="left:494px;top:280px;width:363px;height:31px;background:#f7f7f7"></div>
<div class="a" style="left:514px;top:287px;font-weight:bold;font-size:13.5px">Sprawdź normy czasu pracy</div>
<div class="a" style="left:835px;top:282px;font-size:20px;color:#666">&#10005;</div>
<div class="a" style="left:528px;top:355px;width:310px;height:95px;border:1px solid #ddd"></div>
<div class="a" style="left:528px;top:355px;width:310px;height:14px;border-bottom:1px solid #aaa;font-size:11.5px;line-height:13px;padding-left:3px">Osoba</div>
<div class="a" style="left:528px;top:382px;width:310px;text-align:center;font-weight:bold;font-size:12.5px">NOWAKOWSKI WŁODZIMIERZ</div>
<div class="a" style="left:528px;top:401px;width:310px;text-align:center;font-size:11.5px;line-height:13.5px">Logo: Pracownik &nbsp;&nbsp;&nbsp;1 , Id umowy: 3<br>Umowa o pracę - czas nieokreślony<br>Zatrudniony: 2010-04-01</div>
<div class="a" style="left:528px;top:465px;width:310px;height:155px;border:1px solid #ddd"></div>
<div class="a" style="left:528px;top:465px;width:310px;height:14px;border-bottom:1px solid #aaa;font-size:11.5px;line-height:13px;padding-left:3px">Parametry sprawdzania norm</div>
<div class="a" style="left:612px;top:496px;font-size:12px">Na dzień</div>
<div class="a" style="left:661px;top:492px;width:80px;height:20px;background:#eee;border:1px solid #ddd;line-height:18px;padding-left:4px;font-size:12px">2018-02-01</div>
<div class="a" style="left:545px;top:519px;width:280px;height:94px;border:1px solid #ccc"></div>
<div class="a" style="left:545px;top:519px;width:280px;height:13px;background:#e8e8e8;font-size:11.5px;line-height:13px;padding-left:5px">Zakres kontroli</div>
<div class="a" style="left:551px;top:536px;font-size:12px;line-height:25px">
<div><span class="ti" style="width:12px;height:12px;border-radius:50%;border:1px solid #aaa"></span> Harmonogram + Kalendarz RCP +</div>
<div><span class="ti" style="width:12px;height:12px;border-radius:50%;border:1px solid #aaa"></span> Harmonogram + Kalendarz RCP</div>
<div><span class="ti" style="width:12px;height:12px;border-radius:50%;border:1px solid #aaa;background:radial-gradient(circle,#1a3f7a 3px,#fff 3.5px)"></span> Harmonogram</div></div>
<div class="a" style="left:494px;top:642px;width:363px;height:41px;background:#f7f7f7;border-top:1px solid #e5e5e5"></div>
<svg class="a" style="left:518px;top:655px" width="17" height="16"><rect x="1" y="1" width="15" height="14" fill="#eee" stroke="#777"/><rect x="1" y="1" width="15" height="2" fill="#4a7bb0"/><circle cx="8.5" cy="9" r="3" fill="#777"/></svg>
<span class="a" style="left:543px;top:655px;color:#1a5ea8">&#8964;</span>
<div class="a" style="left:649px;top:651px;width:89px;height:24px;border:1px solid #ddd;background:#fafafa;color:#aaa;text-align:center;line-height:22px">OK</div>
<div class="a" style="left:749px;top:651px;width:89px;height:24px;border:1px solid #ddd;background:#fafafa;color:#aaa;text-align:center;line-height:22px">Anuluj</div>

<!-- dialog 2 -->
<div class="a" style="left:735px;top:447px;width:495px;height:187px;background:#fff;border:2px solid #e2c48a;box-shadow:0 3px 8px rgba(0,0,0,.25)"></div>
<div class="a" style="left:737px;top:449px;width:491px;height:34px;background:#fbf5e0"></div>
<div class="a" style="left:756px;top:458px;font-weight:bold;font-size:13.5px">Informacja</div>
<div class="a" style="left:1204px;top:453px;font-size:18px;color:#666">&#10005;</div>
<svg class="a" style="left:756px;top:523px" width="34" height="32"><path d="M17 2L33 30H1z" fill="#e8b05a" stroke="#e8b05a" stroke-linejoin="round" stroke-width="2"/><rect x="15.3" y="10" width="3.4" height="11" rx="1.5" fill="#111"/><circle cx="17" cy="25.5" r="2" fill="#111"/></svg>
<div class="a" style="left:809px;top:520px;font-weight:bold;font-size:11px;line-height:14px;width:410px;letter-spacing:-0.3px">Istnieją w harmonogramie dni z naruszonym odpoczynkiem tygodniowym w 7-<br>dniowych tygodniach okresu rozliczeniowego</div>
<div class="a" style="left:737px;top:591px;width:491px;height:41px;background:#f6f6f6;border-top:1px solid #e3e3e3"></div>
<div class="a" style="left:1119px;top:600px;width:90px;height:25px;border:1px solid #1a5ea8;border-radius:2px;background:#fff;color:#1a5ea8;text-align:center;line-height:23px">Zatwierdź</div>

</body></html>
